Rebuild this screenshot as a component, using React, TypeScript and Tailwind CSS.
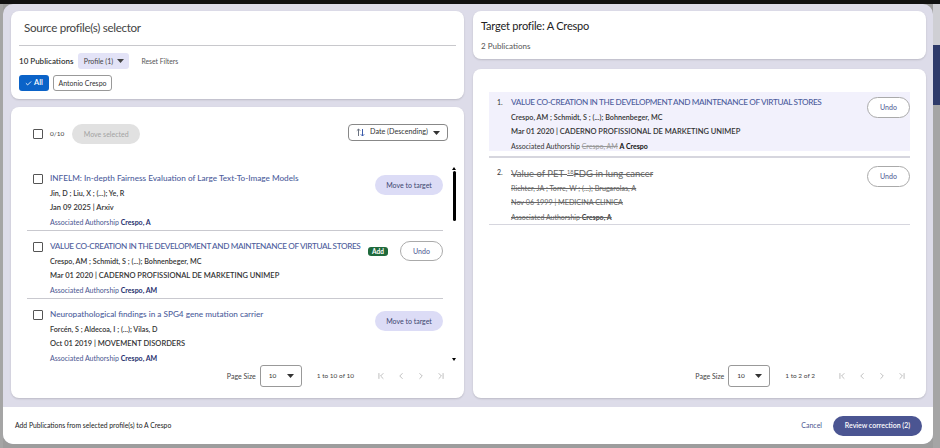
import { Check, ChevronFirst, ChevronLast, ChevronLeft, ChevronRight } from 'lucide-react'

const Caret = () => (
  <svg width="7" height="4" viewBox="0 0 7 4" className="fill-current shrink-0">
    <path d="M0 0h7L3.5 4z" />
  </svg>
)

const SortIcon = () => (
  <svg width="9" height="9" viewBox="0 0 9 9" className="shrink-0">
    <path d="M2.5 8V1M0.8 2.7L2.5 1l1.7 1.7" fill="none" stroke="#6b7280" strokeWidth="1" />
    <path d="M6.5 1v7M4.8 6.3L6.5 8l1.7-1.7" fill="none" stroke="#3b5bab" strokeWidth="1" />
  </svg>
)

function Checkbox() {
  return <span className="block w-[10px] h-[10px] border-[1.5px] border-[#555] rounded-[1px] bg-white shrink-0" />
}

type SourcePub = {
  title: string
  upper?: boolean
  authors: string
  date: string
  assoc: string
  moved?: boolean
}

const sourcePubs: SourcePub[] = [
  {
    title: 'INFELM: In-depth Fairness Evaluation of Large Text-To-Image Models',
    authors: 'Jin, D ; Liu, X ; (...); Ye, R',
    date: 'Jan 09 2025 | Arxiv',
    assoc: 'Crespo, A',
  },
  {
    title: 'VALUE CO-CREATION IN THE DEVELOPMENT AND MAINTENANCE OF VIRTUAL STORES',
    upper: true,
    authors: 'Crespo, AM ; Schmidt, S ; (...); Bohnenbeger, MC',
    date: 'Mar 01 2020 | CADERNO PROFISSIONAL DE MARKETING UNIMEP',
    assoc: 'Crespo, AM',
    moved: true,
  },
  {
    title: 'Neuropathological findings in a SPG4 gene mutation carrier',
    authors: 'Forcén, S ; Aldecoa, I ; (...); Vilas, D',
    date: 'Oct 01 2019 | MOVEMENT DISORDERS',
    assoc: 'Crespo, AM',
  },
]

function Pagination({ range }: { range: string }) {
  return (
    <div className="flex items-center justify-end h-[22px] text-[#444]">
      <span className="text-[7px]">Page Size</span>
      <div className="ml-[4px] w-[42px] h-[22px] border border-[#999] rounded-[3px] flex items-center justify-between pl-[8px] pr-[7px] text-[6.5px] text-[#333]">
        <span>10</span>
        <Caret />
      </div>
      <span className="ml-[15px] text-[6.5px]">{range}</span>
      <div className="ml-[22px] flex items-center gap-[10px] text-[#999]">
        <ChevronFirst size={10} strokeWidth={1.5} />
        <ChevronLeft size={10} strokeWidth={1.5} />
        <ChevronRight size={10} strokeWidth={1.5} />
        <ChevronLast size={10} strokeWidth={1.5} />
      </div>
    </div>
  )
}

function SourceItem({ pub, last }: { pub: SourcePub; last?: boolean }) {
  return (
    <div className={`flex items-start pt-[8px] ${last ? '' : 'border-b border-[#c9c9cf] pb-[1px]'}`}>
      <div className="pl-[6px] pt-[3px]">
        <Checkbox />
      </div>
      <div className="ml-[7px] flex-1 min-w-0">
        <div
          className={`h-[15px] leading-[15px] text-[8.2px] font-medium text-[#4d5d9c] whitespace-nowrap ${
            pub.upper ? 'tracking-[-0.35px]' : ''
          }`}
        >
          {pub.title}
        </div>
        <div className="h-[15px] leading-[15px] text-[7.2px] font-semibold text-[#333]">{pub.authors}</div>
        <div className="h-[14px] leading-[14px] text-[7.5px] font-semibold text-[#333]">{pub.date}</div>
        <div className="h-[14px] leading-[14px] text-[7px] text-[#4a5590]">
          Associated Authorship <span className="font-bold text-[#27306e]">{pub.assoc}</span>
        </div>
      </div>
      {pub.moved ? (
        <div className="flex items-center pt-[2px]">
          <span className="w-[20px] h-[9px] leading-[9px] text-center rounded-[3px] bg-[#1f6a3c] text-white text-[6.5px] font-bold">Add</span>
          <button className="ml-[12px] w-[43px] h-[20px] rounded-full border border-[#aaa] bg-white text-[7px] text-[#4a5590]">Undo</button>
        </div>
      ) : (
        <button className="mt-[4px] w-[68px] h-[20px] rounded-full bg-[#dcdcf6] text-[7px] text-[#3d4670]">Move to target</button>
      )}
    </div>
  )
}

export default function App() {
  return (
    <div className="w-[940px] h-[448px] bg-[#9d9d9d] flex flex-col overflow-hidden font-['Lato',_sans-serif]">
      <div className="h-[4px] bg-[#111] shrink-0" />
      <div className="flex flex-1">
        <div className="w-[3px] bg-[#a5a5a5]" />
        <div className="w-[930px] h-[440px] bg-[#dddce9] rounded-[10px] flex flex-col overflow-hidden">
          <div className="flex gap-[9px] pl-[8px] pr-[7px] pt-[7px] pb-[9px] h-[403px]">
            {/* Source column */}
            <div className="w-[453px] flex flex-col gap-[8px]">
              <div className="bg-white rounded-[8px] h-[88px] px-[8px] pt-[7px] shadow-[0_1px_2px_rgba(0,0,0,0.15)]">
                <div className="h-[20px] leading-[20px] pl-[5px] text-[11.6px] tracking-[-0.3px] text-[#444]">Source profile(s) selector</div>
                <div className="mt-[7px] h-px bg-[#c8c8cc]" />
                <div className="mt-[7px] h-[16px] flex items-center">
                  <span className="text-[8px] font-semibold text-[#333]">10 Publications</span>
                  <div className="ml-[5px] w-[51px] h-[16px] rounded-[3px] bg-[#e3e3f7] flex items-center justify-center gap-[4px] text-[7px] text-[#444]">
                    <span>Profile (1)</span>
                    <Caret />
                  </div>
                  <span className="ml-[12px] text-[6.8px] text-[#555]">Reset Filters</span>
                </div>
                <div className="mt-[6px] h-[16px] flex items-center gap-[4px]">
                  <div className="w-[30px] h-[16px] rounded-[3px] bg-[#0b63c8] flex items-center justify-center gap-[2px] text-white text-[7.5px] font-semibold">
                    <Check size={7} strokeWidth={3} />
                    <span>All</span>
                  </div>
                  <div className="w-[59px] h-[16px] rounded-[3px] border border-[#999] flex items-center justify-center text-[7px] text-[#333]">Antonio Crespo</div>
                </div>
              </div>

              <div className="bg-white rounded-[8px] flex-1 flex flex-col pt-[17px] pb-[11px] shadow-[0_1px_2px_rgba(0,0,0,0.15)]">
                <div className="h-[20px] flex items-center pl-[22px] pr-[16px]">
                  <Checkbox />
                  <span className="ml-[7px] text-[6.5px] text-[#444]">0/10</span>
                  <button className="ml-[8px] w-[68px] h-[20px] rounded-full bg-[#e1e1e1] text-[7px] text-[#a3a3a3]">Move selected</button>
                  <div className="ml-auto w-[100px] h-[17px] mb-[3px] border border-[#888] rounded-[4px] flex items-center justify-center gap-[5px] text-[7.2px] text-[#333]">
                    <SortIcon />
                    <span>Date (Descending)</span>
                    <Caret />
                  </div>
                </div>
                <div className="mt-[19px] h-[202px] flex">
                  <div className="ml-[16px] w-[416px] overflow-hidden">
                    {sourcePubs.map((p, i) => (
                      <SourceItem key={i} pub={p} last={i === sourcePubs.length - 1} />
                    ))}
                  </div>
                  <div className="ml-[9px] w-[4px] flex flex-col items-center">
                    <svg width="4" height="3" viewBox="0 0 4 3" className="mt-[4px] fill-black"><path d="M0 3h4L2 0z" /></svg>
                    <div className="mt-[1px] w-[3px] h-[50px] rounded-full bg-black" />
                    <div className="flex-1" />
                    <svg width="4" height="3" viewBox="0 0 4 3" className="mb-[4px] fill-black"><path d="M0 0h4L2 3z" /></svg>
                  </div>
                </div>
                <div className="pr-[18px]">
                  <Pagination range="1 to 10 of 10" />
                </div>
              </div>
            </div>

            {/* Target column */}
            <div className="w-[453px] flex flex-col gap-[10px]">
              <div className="bg-white rounded-[8px] h-[48px] px-[8px] pt-[6px] shadow-[0_1px_2px_rgba(0,0,0,0.15)]">
                <div className="h-[18px] leading-[18px] text-[11px] tracking-[-0.2px] text-[#222]">Target profile: A Crespo</div>
                <div className="mt-[5px] h-[12px] leading-[12px] text-[8px] text-[#555]">2 Publications</div>
              </div>
              <div className="bg-white rounded-[8px] flex-1 flex flex-col pt-[23px] pb-[11px] shadow-[0_1px_2px_rgba(0,0,0,0.15)]">
                <div className="mx-[16px] h-[270px]">
                  <div className="bg-[#f2f1fc] h-[59px] flex items-start pl-[8px] pt-[3px]">
                    <span className="w-[14px] h-[15px] leading-[15px] text-[7px] text-[#333]">1.</span>
                    <div className="flex-1 min-w-0">
                      <div className="h-[15px] leading-[15px] text-[8.2px] font-medium tracking-[-0.35px] text-[#4d5d9c] whitespace-nowrap">VALUE CO-CREATION IN THE DEVELOPMENT AND MAINTENANCE OF VIRTUAL STORES</div>
                      <div className="h-[15px] leading-[15px] text-[7.2px] font-semibold text-[#333]">Crespo, AM ; Schmidt, S ; (...); Bohnenbeger, MC</div>
                      <div className="h-[14px] leading-[14px] text-[7.5px] font-semibold text-[#333]">Mar 01 2020 | CADERNO PROFISSIONAL DE MARKETING UNIMEP</div>
                      <div className="h-[14px] leading-[14px] text-[7px] text-[#333]">
                        Associated Authorship <span className="line-through text-[#999]">Crespo, AM</span> <span className="font-bold text-[#111]">A Crespo</span>
                      </div>
                    </div>
                    <button className="mt-[2px] w-[43px] h-[21px] rounded-full border border-[#aaa] bg-white text-[7px] text-[#4a5590]">Undo</button>
                  </div>
                  <div className="mt-[5px] h-[1.5px] bg-[#d6d6de]" />
                  <div className="flex items-start pl-[8px] pt-[8px] border-b-[1.5px] border-[#d6d6de]">
                    <span className="w-[14px] h-[12px] leading-[12px] text-[7px] text-[#333]">2.</span>
                    <div className="flex-1 min-w-0 text-[#666] line-through">
                      <div className="h-[15px] leading-[15px] text-[9.5px]">
                        Value of PET-<sup className="text-[5.5px]">18</sup>FDG in lung cancer
                      </div>
                      <div className="h-[15px] leading-[15px] text-[7.2px]">Richter, JA ; Torre, W ; (...); Brugarolas, A</div>
                      <div className="h-[14px] leading-[14px] text-[7.2px]">Nov 06 1999 | MEDICINA CLINICA</div>
                      <div className="h-[14px] leading-[14px] text-[7px]">
                        Associated Authorship <span className="font-bold text-[#444]">Crespo, A</span>
                      </div>
                    </div>
                    <button className="w-[43px] h-[21px] rounded-full border border-[#aaa] bg-white text-[7px] text-[#4a5590]">Undo</button>
                  </div>
                </div>
                <div className="mt-auto pr-[19px]">
                  <Pagination range="1 to 2 of 2" />
                </div>
              </div>
            </div>
          </div>

          {/* Footer bar */}
          <div className="flex-1 bg-white flex items-center pl-[12px] pr-[11px]">
            <span className="text-[6.8px] text-[#222]">Add Publications from selected profile(s) to A Crespo</span>
            <span className="ml-auto text-[7px] text-[#4a5590]">Cancel</span>
            <button className="ml-[11px] w-[89px] h-[20px] rounded-full bg-[#4b5592] text-white text-[7px] font-semibold">Review correction (2)</button>
          </div>
        </div>
        <div className="flex-1 flex flex-col">
          <div className="h-[41px] bg-[#cfcfd4]" />
          <div className="h-[60px] bg-[#2e3a6a]" />
          <div className="flex-1 bg-[#a5a5a5]" />
        </div>
      </div>
    </div>
  )
}
